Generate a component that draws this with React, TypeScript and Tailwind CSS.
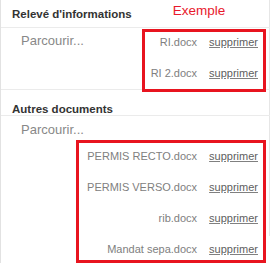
import React from "react";

function Row({ name }: { name: string }) {
  return (
    <div className="flex items-center text-[11px] leading-[13px] whitespace-nowrap">
      <span className="text-[#808080]">{name}</span>
      <span className="ml-[12px] text-[#606060] underline decoration-[#808080] underline-offset-[1px]">supprimer</span>
    </div>
  );
}

export default function App() {
  return (
    <div className="w-[271px] h-[276px] bg-white font-['Liberation_Sans',Arial,sans-serif]">
      <div className="w-[270px] border-l border-[#e2e2e2] bg-[linear-gradient(#e6e6e6,#e6e6e6)] bg-no-repeat bg-[length:1px_236px] bg-[position:right_top]">
        <div className="h-[28px] border-b border-[#ebebeb] flex items-start pl-[11px] pt-[7px]">
          <span className="text-[11.5px] font-bold leading-[14px] text-[#333]">Relevé d'informations</span>
          <span className="ml-[41px] -mt-[4px] text-[13.5px] leading-[16px] text-[#e8192c]">Exemple</span>
        </div>
        <div className="h-[62px] border-b border-[#ebebeb] flex justify-between items-start pl-[20px] pr-[4px]">
          <span className="mt-[5px] text-[13px] leading-[15px] text-[#888]">Parcourir...</span>
          <div className="relative z-10 mt-[1px] w-[124px] border-[3px] border-[#e8141f] flex flex-col items-end pt-[4px] pb-[9px] gap-[18px] pr-[5px]">
            <Row name="RI.docx" />
            <Row name="RI 2.docx" />
          </div>
        </div>
        <div className="h-[26px] border-b border-[#ebebeb] pl-[11px] pt-[6px]">
          <span className="text-[11.5px] font-bold leading-[14px] text-[#333]">Autres documents</span>
        </div>
        <div className="flex flex-col">
          <span className="mt-[6px] pl-[20px] text-[13px] leading-[15px] text-[#888]">Parcourir...</span>
          <div className="mt-[3px] self-end mr-[4px] w-[190px] border-[3px] border-[#e8141f] flex flex-col items-end pt-[7px] pb-[4px] gap-[18px] pr-[5px]">
            <Row name="PERMIS RECTO.docx" />
            <Row name="PERMIS VERSO.docx" />
            <Row name="rib.docx" />
            <Row name="Mandat sepa.docx" />
          </div>
        </div>
      </div>
    </div>
  );
}
